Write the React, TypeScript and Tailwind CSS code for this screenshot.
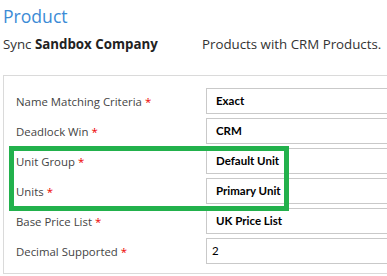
import React from "react";

const rows: { label: string; value: string; plain?: boolean }[] = [
  { label: "Name Matching Criteria", value: "Exact" },
  { label: "Deadlock Win", value: "CRM" },
  { label: "Unit Group", value: "Default Unit" },
  { label: "Units", value: "Primary Unit" },
  { label: "Base Price List", value: "UK Price List" },
  { label: "Decimal Supported", value: "2", plain: true },
];

export default function App() {
  return (
    <div
      className="relative w-[387px] h-[276px] overflow-hidden bg-white"
      style={{ fontFamily: '"Open Sans", "Noto Sans", sans-serif' }}
    >
      <div className="pl-[3px] pt-[3px] h-[30px] text-[17.6px] leading-[26px] text-[#3b8bd6]">
        Product
      </div>
      <div className="flex items-center h-[30px] pl-[3px] text-[13.3px] text-[#333]">
        <span className="w-[199px] shrink-0">
          Sync <span className="font-bold text-[#222]">Sandbox Company</span>
        </span>
        <span>Products with CRM Products.</span>
      </div>
      <div className="mt-[15px] ml-[3px] w-[400px] h-[199px] border border-[#dadada] pt-[12px] pl-[12px] flex flex-col gap-[4px]">
        {rows.map((r) => (
          <div key={r.label} className="flex items-center h-[26px]">
            <div className="w-[190px] shrink-0 text-[11.4px] text-[#444] pt-[2px]">
              {r.label} <span className="text-[#e00]">*</span>
            </div>
            <div
              className={`flex-1 h-[26px] border border-[#c9c9c9] flex items-center text-[11.5px] text-black ${
                r.plain ? "pl-[5px]" : "pl-[9px] font-bold"
              }`}
              style={{ fontFamily: 'Lato, "Open Sans", sans-serif' }}
            >
              {r.value}
            </div>
          </div>
        ))}
      </div>
      <div className="absolute left-[9px] top-[146px] w-[280px] h-[65px] border-[5px] border-[#22b14c]" />
    </div>
  );
}
